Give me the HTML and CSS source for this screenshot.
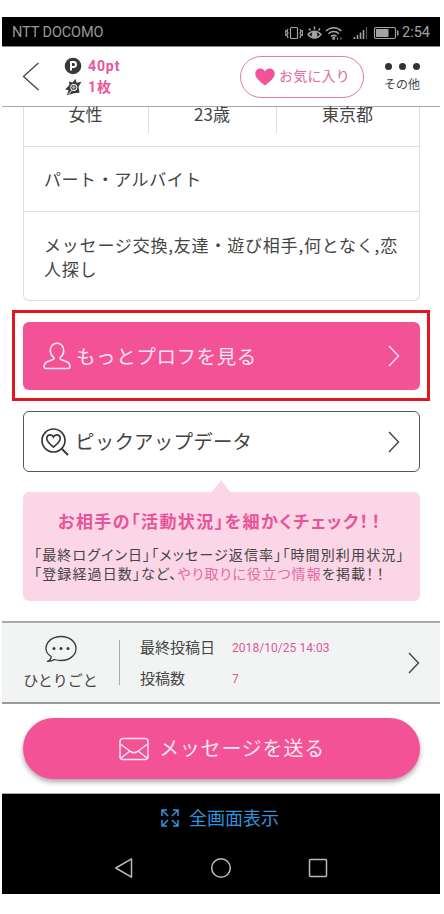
FILE: index.html
```html
<!DOCTYPE html>
<html lang="ja">
<head>
<meta charset="utf-8">
<title>プロフィール</title>
<link rel="stylesheet" href="styles.css">
</head>
<body>
<div class="phone">
  <div class="status">
    <span class="carrier">NTT DOCOMO</span>
    <svg class="status-icons" width="114" height="20" viewBox="0 0 114 20" fill="none" stroke="#a3a3a3" stroke-width="1.2">
      <rect x="5.5" y="4.5" width="7" height="11" rx="1"/>
      <path d="M3 6l-1 2 1 2-1 2 1 3M15 6l1 2-1 2 1 2-1 3M.8 7v6M17.3 7v6"/>
      <path stroke-width="1.500" d="M23 11.500c3.500-4.500 9.500-4.500 13 0-3.500 4.500-9.500 4.500-13 0zM24 5.500l1.500 2M29.500 3.500v3M35 5.500L33.500 7.500"/>
      <circle cx="29.500" cy="11.500" r="2.300" fill="#a3a3a3"/>
      <path stroke-width="1.500" d="M41 8c4.500-4.500 11-4.500 15.500 0M43.500 10.800c3-3 7.500-3 10.500 0M46 13.500c1.800-1.500 3.700-1.500 5.500 0"/>
      <circle cx="48.700" cy="15.300" r=".9" fill="#a3a3a3"/>
      <path d="M52 15.500h1M55.500 15.500h1" stroke-width="2"/>
      <path d="M69.500 14v2M72.500 12v4M75.500 9.500V16M78.500 7v9" stroke-width="1.600"/><path d="M81.500 4v12" stroke="#555"/>
      <rect x="89.500" y="4.500" width="21" height="11" rx="1.500"/><rect x="91" y="6" width="12.500" height="8" fill="#a3a3a3" stroke="none"/><path d="M112.800 7.500v5" stroke-width="1.500"/>
    </svg>
    <span class="clock">2:54</span>
  </div>

  <header class="header">
    <svg class="back" width="18" height="30" viewBox="0 0 18 30" fill="none" stroke="#444" stroke-width="1.300"><path d="M16.500 1L1.500 14.500l15 13.500"/></svg>
    <div class="wallet">
      <div class="wallet-row"><svg width="18" height="18" viewBox="0 0 18 18"><circle cx="9" cy="9" r="8.300" fill="#393939"/><path d="M7 13.500V5h2.500a2.500 2.500 0 0 1 0 5H7" fill="none" stroke="#fff" stroke-width="1.900"/></svg><span class="points">40pt</span></div>
      <div class="wallet-row"><svg width="18" height="18" viewBox="0 0 18 18"><path d="M11.500 1l1 3.700 5-1-3 5 1 6-4 .3L3 17l1.500-5L1 11.500 5.500 7 5 3.500l3.500 1z" fill="#393939"/><circle cx="9.800" cy="9.500" r="3.200" fill="#555" stroke="#fff"/><path d="M8 12.300L4.500 16" stroke="#fff"/><path d="M9.800 7.500v4M8 9.200h3.500" stroke="#ddd" stroke-width=".8"/></svg><span class="tickets">1枚</span></div>
    </div>
    <div class="favorite">
      <svg width="20" height="18" viewBox="0 0 20 18"><path d="M10 17.500C6.500 14.500.3 10.500.3 5.700.3 2.800 2.500.6 5.200.6 7.300.6 9 1.700 10 3.500 11 1.700 12.700.6 14.800.6c2.700 0 4.900 2.200 4.900 5.100 0 4.800-6.200 8.800-9.700 11.800z" fill="#f35296"/></svg>
      <span>お気に入り</span>
    </div>
    <div class="other">
      <div class="dots"><i></i><i></i><i></i></div>
      <span>その他</span>
    </div>
  </header>

  <main class="content">
    <section class="profile">
      <div class="basics"><span>女性</span><span>23歳</span><span>東京都</span></div>
      <div class="job">パート・アルバイト</div>
      <div class="purpose">メッセージ交換,友達・遊び相手,何となく,恋<br>人探し</div>
    </section>

    <div class="highlight">
      <div class="button primary">
        <svg class="lead" width="28" height="28" viewBox="0 0 28 28" fill="none" stroke="#ffe6f1" stroke-width="1.600" stroke-linejoin="round"><path d="M10.600 15.300C8.200 13.400 7.300 11 7.300 8.500c0-4.200 2.700-7.300 6.700-7.300s6.700 3.100 6.700 7.300c0 2.500-.9 4.900-3.300 6.800-.8.700-.6 1.700.4 2.100l5.400 2.100c2.600 1 3.800 2.600 3.800 5.100 0 1.200-.6 1.900-1.800 1.900H2.800C1.600 26.500 1 25.800 1 24.600c0-2.500 1.200-4.100 3.800-5.100l5.400-2.100c1-.4 1.200-1.400.4-2.100z"/></svg>
        <span>もっとプロフを見る</span>
        <svg class="chevron" width="12" height="22" viewBox="0 0 12 22"><path d="M1 1l9.500 10L1 21"/></svg>
      </div>
    </div>

    <div class="button outline">
      <svg class="lead" width="28" height="28" viewBox="0 0 28 28" fill="none" stroke="#393939" stroke-width="1.700"><circle cx="12.500" cy="12.500" r="11.500"/><path d="M20.500 20.500l6.500 6.500" stroke-width="2"/><path d="M12.500 19C9.500 16.500 5.800 14 5.800 10.500c0-2.100 1.500-3.700 3.400-3.700 1.400 0 2.600.7 3.300 2.100.7-1.400 1.900-2.100 3.300-2.100 1.900 0 3.400 1.600 3.400 3.700 0 3.500-3.700 6-6.700 8.500z"/></svg>
      <span>ピックアップデータ</span>
      <svg class="chevron" width="12" height="22" viewBox="0 0 12 22"><path d="M1 1l9.500 10L1 21"/></svg>
    </div>

    <svg class="tip-arrow" width="20" height="13" viewBox="0 0 20 13"><path d="M0 13L10 0l10 13z" fill="#fad6e6"/></svg>
    <section class="tip">
      <h2>お相手の「活動状況」を細かくチェック<b>！！</b></h2>
      <p class="tip-first">「最終ログイン日」「メッセージ返信率」「時間別利用状況」</p>
      <p class="tip-second">「登録経過日数」など、<em>やり取りに役立つ情報</em>を掲載<b>！！</b></p>
    </section>
  </main>

  <section class="mutter">
    <div class="mutter-name">
      <svg width="32" height="28" viewBox="0 0 32 28" fill="none" stroke="#393939" stroke-width="1.300" stroke-linejoin="round"><path d="M6.200 21.500C2.800 19.500 1 16.700 1 13.500 1 6.500 7.700 1.500 16 1.500s15 5 15 12-6.700 12-15 12c-2.400 0-4.500-.3-6.500-1-1.500 1-4 1.900-7 1.900 2.500-1 3.700-2.900 3.700-4.900z"/><g fill="#393939" stroke="none"><circle cx="9" cy="13.500" r="1.500"/><circle cx="16" cy="13.500" r="1.500"/><circle cx="23" cy="13.500" r="1.500"/></g></svg>
      <span>ひとりごと</span>
    </div>
    <dl class="posts">
      <dt>最終投稿日</dt><dd>2018/10/25 14:03</dd>
      <dt>投稿数</dt><dd>7</dd>
    </dl>
    <svg class="chevron" width="12" height="22" viewBox="0 0 12 22"><path d="M1 1l9.500 10L1 21"/></svg>
  </section>

  <div class="send-area">
    <div class="send">
      <svg width="30" height="24" viewBox="0 0 30 24" fill="none" stroke="#ffe6f1" stroke-width="1.500" stroke-linejoin="round"><rect x="1" y="1.500" width="28" height="21" rx="3"/><path d="M2 7.500l9.500 7c2 1.300 5 1.300 7 0l9.500-7M2 21l9-7M28 21l-9-7"/></svg>
      <span>メッセージを送る</span>
    </div>
  </div>

  <footer class="system">
    <div class="fullscreen">
      <svg width="18" height="18" viewBox="0 0 18 18" fill="none" stroke="#2f94dc" stroke-width="1.500"><path d="M1 7V1h5M1 1l6 6M12 1h5v6M17 1l-6 6M1 11v6h5M1 17l6-6M12 17h5v-6M17 17l-6-6"/></svg>
      <span>全画面表示</span>
    </div>
    <div class="nav">
      <svg width="20" height="22" viewBox="0 0 20 22"><path d="M17.500 1.800v18.400L1.800 11z"/></svg>
      <svg width="22" height="22" viewBox="0 0 22 22"><circle cx="11" cy="11" r="9.300"/></svg>
      <svg width="20" height="20" viewBox="0 0 20 20"><rect x="1.500" y="1.500" width="17" height="17" rx="1"/></svg>
    </div>
  </footer>
</div>
</body>
</html>
```
FILE: styles.css
```css
* { box-sizing: border-box; }
body { margin: 0; background: #fff; color: #444; font-family: "Noto Sans CJK JP", sans-serif; }
h2, p, dl, dd { margin: 0; }
em { font-style: normal; }
span, h2, p, dt, dd { white-space: nowrap; }
svg { display: block; flex: none; }
.phone { width: 438px; height: 877px; margin: 17px 0 0 2px; }
.status { height: 29px; background: #000; display: flex; align-items: center; padding: 2px 9px 0 10px; font-family: Roboto, sans-serif; color: #999; }
.carrier { font-size: 14.5px; letter-spacing: -0.1px; }
.status-icons { margin-left: auto; margin-right: 3px; }
.clock { font-size: 14.5px; color: #a3a3a3; width: 29px; }
.header { height: 61px; border-top: 1px solid #888; border-bottom: 1px solid #aaa; display: flex; align-items: center; background: #fff; }
.back { margin-left: 20px; width: 18px; }
.wallet { margin-left: 24px; width: 120px; }
.wallet-row { display: flex; align-items: center; height: 21px; gap: 6px; color: #e8559a; font-weight: 700; font-size: 13px; }
.points { font-family: Roboto, sans-serif; font-size: 14px; letter-spacing: 0.9px; }
.tickets { font-family: Roboto, "Noto Sans CJK JP", sans-serif; font-size: 14px; letter-spacing: 1px; margin-top: -3px; }
.favorite { margin-left: 56px; width: 124px; height: 42px; border: 1.500px solid #df7cab; border-radius: 21px; display: flex; align-items: center; padding-left: 14px; gap: 4px; font-size: 14px; color: #e26ca1; letter-spacing: 0.2px; }
.favorite span { margin-top: -3px; }
.other { margin-left: 18px; width: 40px; text-align: center; font-size: 12px; line-height: 16px; }
.dots { display: flex; gap: 7px; justify-content: center; margin: 1px 0 6px; }
.dots i { width: 7px; height: 7px; border-radius: 50%; background: #333; }
.content { height: 514px; padding: 0 20px 0 21px; }
.profile { height: 194px; border: 1px solid #ddd; border-top: 0; border-radius: 0 0 6px 6px; font-size: 17px; letter-spacing: 0.55px; }
.basics { height: 40px; border-bottom: 1px solid #ddd; display: grid; grid-template-columns: 124px 128px 1fr; font-size: 17px; line-height: 14px; letter-spacing: 0; text-align: center; }
.basics span { height: 26px; padding-right: 1px; }
.basics span + span { border-left: 1px solid #ddd; }
.job { height: 65px; border-bottom: 1px solid #ddd; padding-left: 20px; line-height: 64px; }
.purpose { padding: 21px 0 0 20px; line-height: 24px; white-space: nowrap; letter-spacing: 0.8px; }
.highlight { height: 91px; margin: 9px -10px 10px -11px; border: 3px solid #df1820; padding: 9px 7px 8px 8px; }
.button { display: flex; align-items: center; border-radius: 6px; padding: 0 20px; }
.button span { margin-top: -2px; }
.button .chevron { margin-left: auto; }
.lead { margin-right: 5px; }
.chevron path { fill: none; stroke: #444; stroke-width: 1.400px; }
.primary { height: 68px; background: #f35296; color: #ffe6f1; font-size: 19.500px; letter-spacing: 0.6px; }
.primary .chevron path { stroke: #ffe6f1; }
.outline { height: 61px; border: 1.500px solid #555; font-size: 19.500px; letter-spacing: 0.2px; padding: 0 19px 0 17px; }
.outline .lead { margin-right: 6px; }
.tip-arrow { margin: 8px 0 0 188px; }
.tip { height: 109px; margin-top: -1px; border-radius: 6px; background: #fad6e6; font-feature-settings: "palt"; }
.tip h2 { color: #e9529a; font-size: 17px; line-height: 24px; padding: 17px 0 0 35px; letter-spacing: 1.45px; }
.tip p { font-size: 14px; line-height: 19px; padding-left: 11px; letter-spacing: 1.13px; }
.tip b { font-weight: inherit; letter-spacing: 3.500px; }
.tip .tip-first { margin-top: 12px; }
.tip em { color: #e46aa3; }
.mutter { height: 83px; border-top: 2px solid #aaa; border-bottom: 2px solid #999; background: #f2f4f4; display: flex; align-items: center; padding-right: 20px; }
.mutter-name { width: 118px; height: 45px; border-right: 1px solid #aaa; display: flex; flex-direction: column; align-items: center; justify-content: center; gap: 6px; font-size: 15px; line-height: 22px; }
.posts { margin-left: 20px; display: grid; grid-template-columns: 92px auto; row-gap: 6px; font-size: 15px; line-height: 23px; }
.posts dd { font-family: Roboto, sans-serif; font-size: 12px; letter-spacing: 0.05px; color: #e0559b; padding-top: 2px; }
.mutter .chevron { margin-left: auto; }
.send-area { height: 90px; padding: 14px 20px 0 21px; border-bottom: 1px solid #aaa; }
.send { height: 61px; border-radius: 31px; background: #f35296; box-shadow: 0 3px 5px rgba(60, 30, 40, 0.4); display: flex; align-items: center; padding-left: 96px; gap: 10px; color: #ffe6f1; font-size: 20px; letter-spacing: 0.8px; }
.send span { margin-top: -2px; }
.system { height: 100px; background: #000; padding-top: 12px; }
.fullscreen { height: 24px; display: flex; align-items: center; padding-left: 159px; gap: 10px; color: #2f94dc; font-size: 18px; }
.fullscreen span { margin-top: -2px; }
.nav { display: flex; align-items: center; height: 22px; margin-top: 27px; padding-left: 112px; }
.nav svg { fill: none; stroke: #bbb; stroke-width: 1.500px; stroke-linejoin: round; }
.nav svg + svg { margin-left: 76px; }
.nav svg:last-child { margin-left: 76px; }
```
